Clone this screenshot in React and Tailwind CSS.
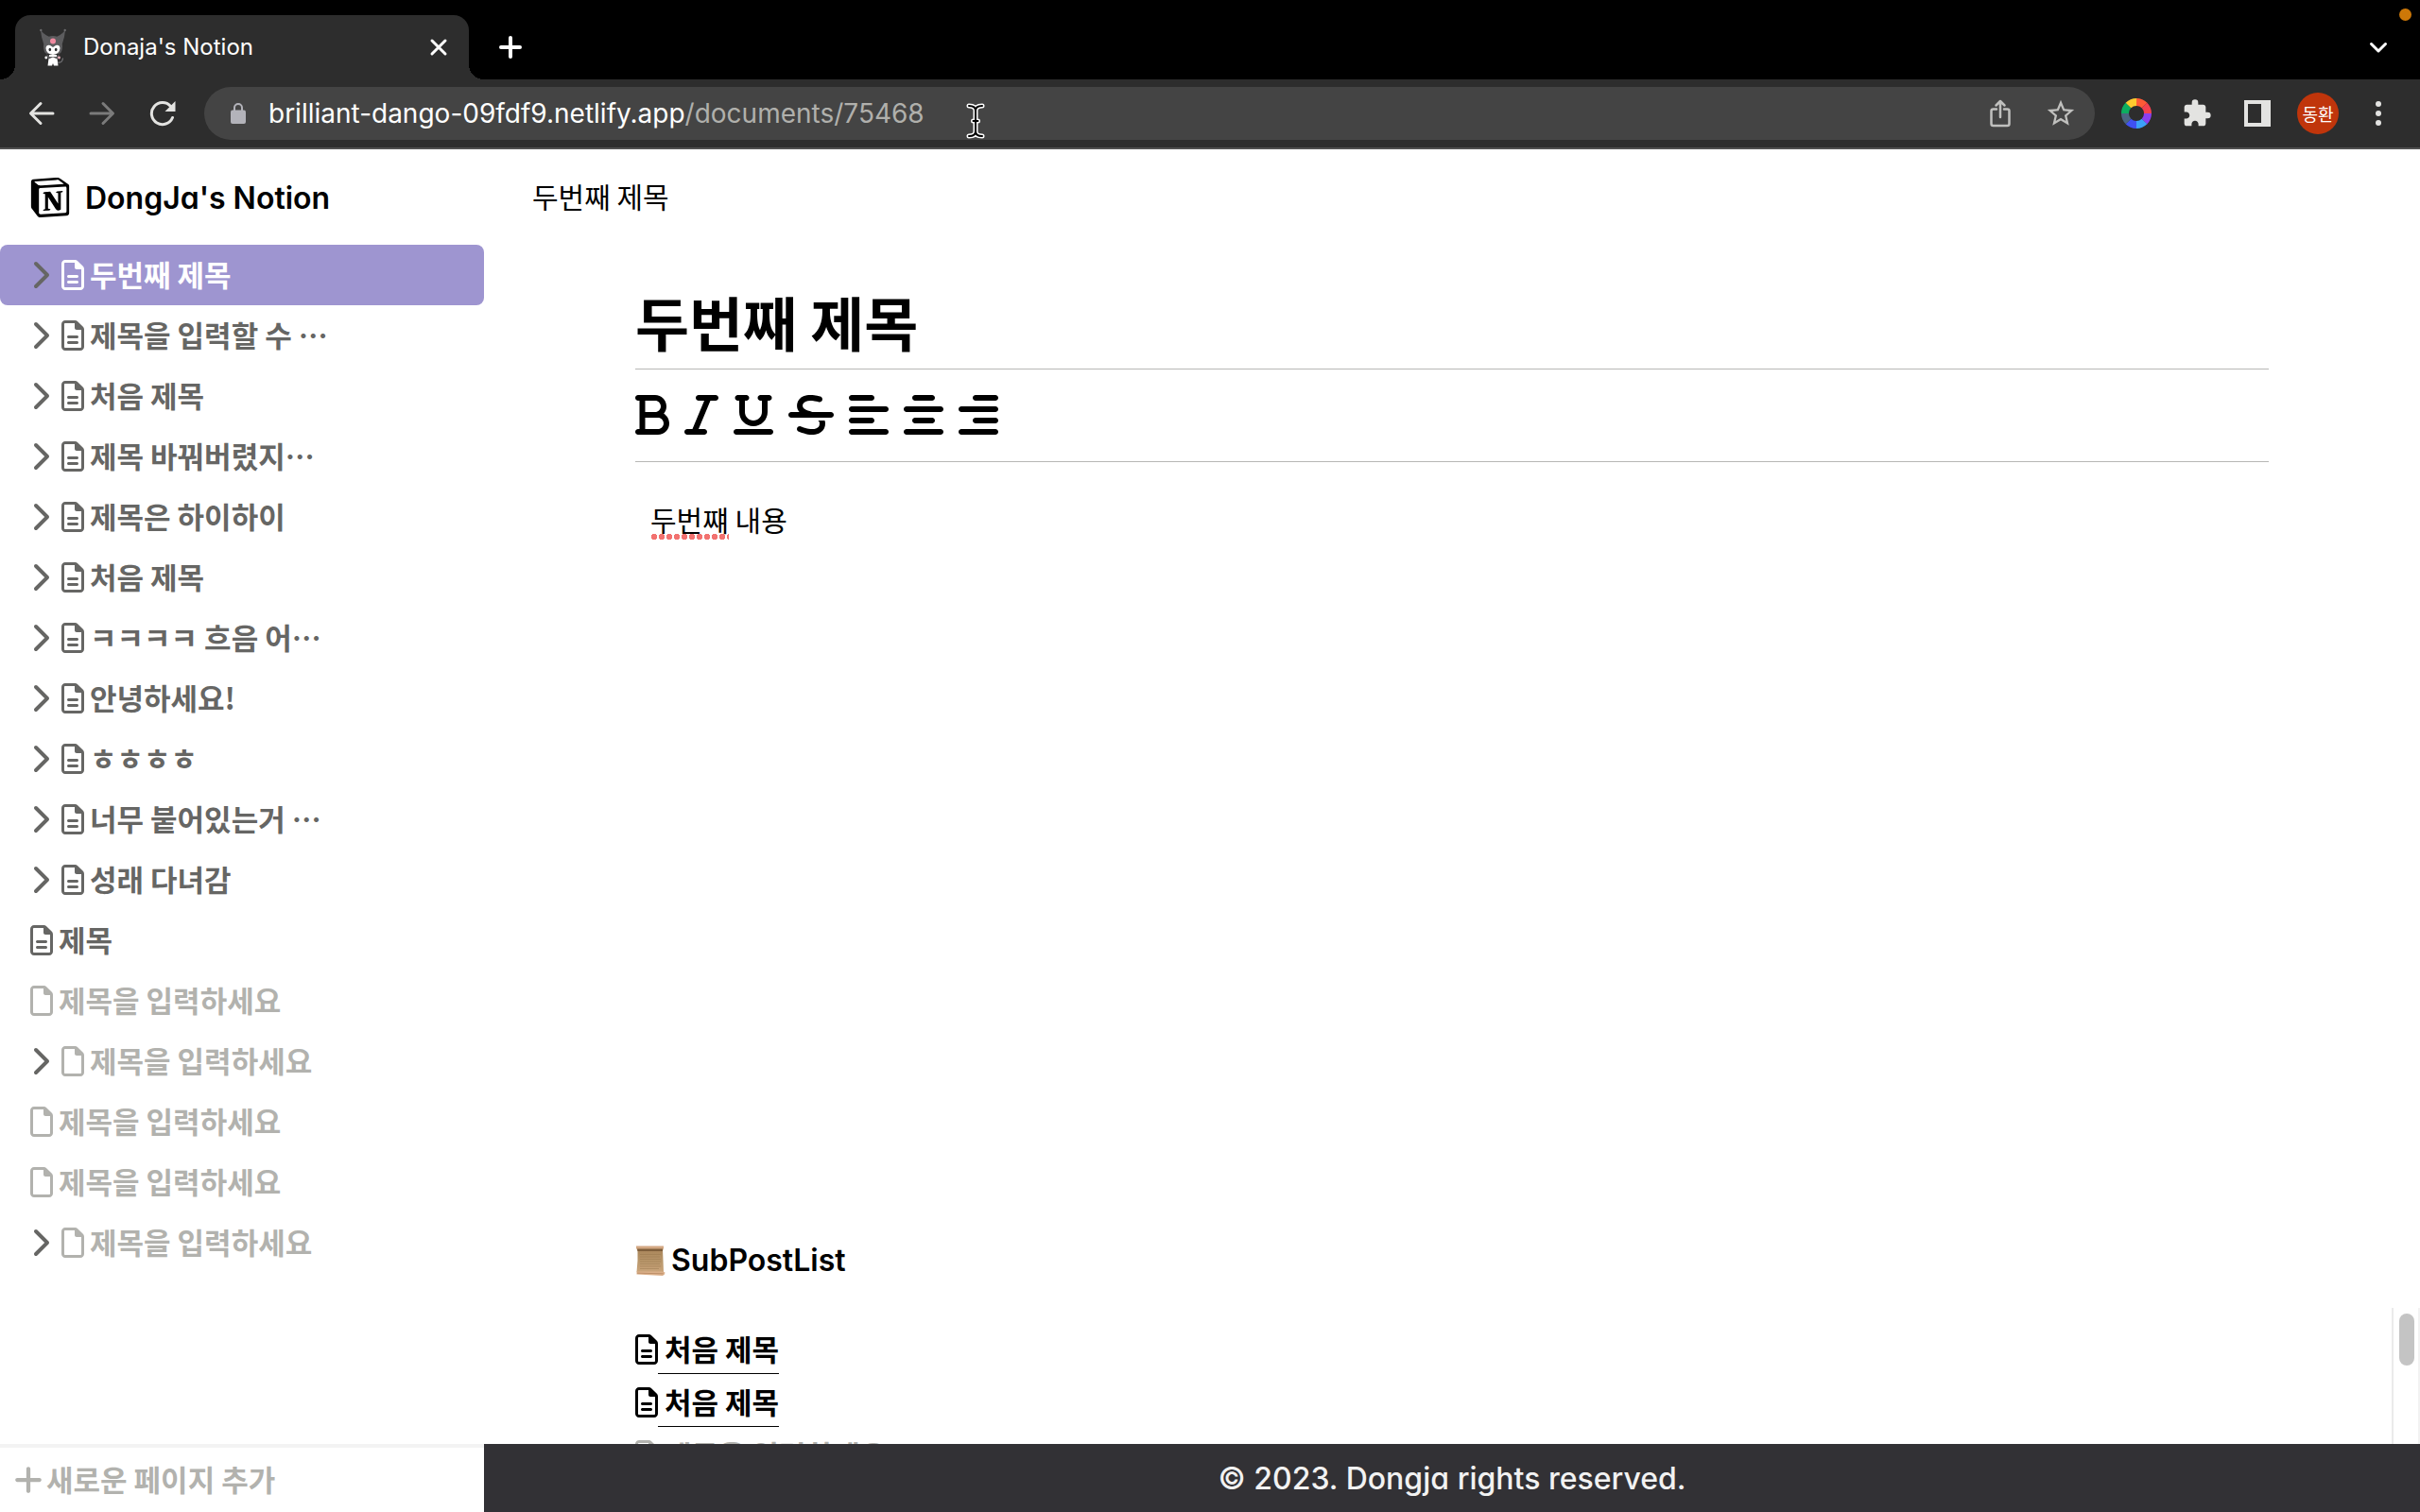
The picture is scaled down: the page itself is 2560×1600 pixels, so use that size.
import React from "react";
import {
  FaAlignCenter,
  FaAlignLeft,
  FaAlignRight,
  FaBold,
  FaChevronRight,
  FaItalic,
  FaPlus,
  FaRegFile,
  FaRegFileLines,
  FaStrikethrough,
  FaUnderline,
} from "react-icons/fa6";
import { SiNotion } from "react-icons/si";
import { MdExtension, MdStarBorder } from "react-icons/md";

const placeholder = "제목을 입력하세요";

const pages = [
  { title: "두번째 제목", expandable: true, selected: true },
  { title: "제목을 입력할 수 …", expandable: true },
  { title: "처음 제목", expandable: true },
  { title: "제목 바꿔버렸지…", expandable: true },
  { title: "제목은 하이하이", expandable: true },
  { title: "처음 제목", expandable: true },
  { title: "ㅋㅋㅋㅋ 흐음 어…", expandable: true },
  { title: "안녕하세요!", expandable: true },
  { title: "ㅎㅎㅎㅎ", expandable: true },
  { title: "너무 붙어있는거 …", expandable: true },
  { title: "성래 다녀감", expandable: true },
  { title: "제목" },
  { title: "" },
  { title: "", expandable: true },
  { title: "" },
  { title: "" },
  { title: "", expandable: true },
];

const subPosts = [{ title: "처음 제목" }, { title: "처음 제목" }, { title: "" }];

const tools = [
  { label: "Bold", Icon: FaBold, size: "h-12 w-9" },
  { label: "Italic", Icon: FaItalic, size: "h-12 w-9" },
  { label: "Underline", Icon: FaUnderline, size: "h-12 w-[42px]" },
  { label: "Strikethrough", Icon: FaStrikethrough, size: "h-12 w-12" },
  { label: "Align left", Icon: FaAlignLeft, size: "h-12 w-[42px]" },
  { label: "Align center", Icon: FaAlignCenter, size: "h-12 w-[42px]" },
  { label: "Align right", Icon: FaAlignRight, size: "h-12 w-[42px]" },
];

function Favicon() {
  return (
    <svg viewBox="0 0 28 40" className="h-10 w-7" aria-hidden="true">
      <path d="M1 2 Q1.5 9 4 16 L9 18 L13 10 Q6 8 1 2 Z M27 2 Q26.5 9 24 16 L19 18 L15 10 Q22 8 27 2 Z" fill="#5c5c5e" />
      <circle cx="1.3" cy="2" r="1.2" fill="#6d6d6f" />
      <circle cx="26.7" cy="2" r="1.2" fill="#6d6d6f" />
      <path d="M4 19 Q4 8 14 8 Q24 8 24 19 Q24 26 20 27 L8 27 Q4 26 4 19 Z" fill="#5c5c5e" />
      <path d="M6.5 21 Q7 17 11 18 L14 20 L17 18 Q21 17 21.5 21 Q21 27 14 28 Q7 27 6.5 21 Z" fill="#fff" />
      <circle cx="14" cy="13.5" r="3" fill="#f08aa0" />
      <ellipse cx="10.8" cy="22.5" rx="1.3" ry="1.8" fill="#2c2c2e" />
      <ellipse cx="17.2" cy="22.5" rx="1.3" ry="1.8" fill="#2c2c2e" />
      <path d="M10 28 L18 28 L19.5 39.5 L15 39.5 L14 37 L13 39.5 L8.5 39.5 Z" fill="#fff" />
      <path d="M7 27 L10.5 30 L17.5 30 L21 27 L18.5 32.5 L14 30.5 L9.5 32.5 Z" fill="#5c5c5e" />
      <circle cx="6.8" cy="31" r="1.4" fill="#fff" />
      <circle cx="20.5" cy="31" r="1.4" fill="#f4b6c2" />
      <path d="M19 36 Q24 37 24.5 31.5" fill="none" stroke="#77777a" strokeWidth="1.2" />
    </svg>
  );
}

function Scroll() {
  return (
    <svg viewBox="0 0 32 34" className="h-[34px] w-8" aria-hidden="true">
      <defs>
        <linearGradient id="paper" x1="0" x2="0" y1="0" y2="1">
          <stop offset="0" stopColor="#a9855a" />
          <stop offset="0.5" stopColor="#b8966a" />
          <stop offset="1" stopColor="#caa47a" />
        </linearGradient>
      </defs>
      <path d="M2.5 5 L29 5 L30 29 L1.5 29 Q3 17 2.5 5 Z" fill="url(#paper)" />
      <path d="M1 1.5 L30 1.5 L30 4 L29 6.5 L2.5 6.5 L1 4 Z" fill="#d3a883" />
      <path d="M2 4.5 L29 4.5 L29 7 L2.5 7 Z" fill="#7f5e3b" />
      <path d="M1.5 28.5 L29 28.5 L31.5 29.5 L31 31.5 L29 33 L1.5 31.5 Z" fill="#dcb08a" />
      <path d="M2 30.2 L29.5 30.8" stroke="#b5875f" strokeWidth="0.8" />
      <path d="M5 10.5 H27 M5 13 H26 M5 15.5 H27 M5 18 H27 M5 20.5 H26 M5 23 H27 M5 25.5 H25" stroke="#94734c" strokeWidth="0.6" opacity="0.7" />
    </svg>
  );
}

const wheelSlices = ["#ff5a36", "#f5414f", "#8a3ff0", "#3ba1f8", "#3f51f2", "#4a6580", "#0cae5f", "#fdca2e"];

function ColorWheel() {
  return (
    <svg viewBox="-16 -16 32 32" className="size-8" aria-hidden="true">
      {wheelSlices.map((color, i) => (
        <path key={color} d="M0 -8 L0 -16 A16 16 0 0 1 11.4 -11.2 L5.7 -5.7 A8 8 0 0 0 0 -8 Z" fill={color} transform={`rotate(${i * 45})`} />
      ))}
    </svg>
  );
}

function ToolbarButton({ label, children }) {
  return (
    <button type="button" aria-label={label} className="flex h-14 w-16 shrink-0 items-center justify-center">
      {children}
    </button>
  );
}

function Stroke({ children, className = "size-7", width = 3 }) {
  return (
    <svg viewBox="0 0 28 28" className={className} fill="none" stroke="currentColor" strokeWidth={width} strokeLinecap="round" strokeLinejoin="round" aria-hidden="true">
      {children}
    </svg>
  );
}

function BrowserChrome() {
  return (
    <header className="shrink-0 bg-black font-['Inter',sans-serif] text-white">
      <div className="relative flex h-[84px] items-end justify-between">
        <div className="flex h-[68px] items-center">
          <div className="flex h-full w-4 items-end">
            <div className="h-4 w-4 bg-[radial-gradient(circle_at_0_0,#000_16px,#2d2d2d_16px)]" />
          </div>
          <div className="flex h-full w-[480px] items-center rounded-t-2xl bg-[#2d2d2d] pr-[18px] pl-[26px]">
            <Favicon />
            <span className="ml-[18px] grow text-[24px] leading-8">Donaja's Notion</span>
            <button type="button" aria-label="Close tab" className="flex size-7 items-center justify-center">
              <Stroke width={3}>
                <path d="M7 7 L21 21 M21 7 L7 21" />
              </Stroke>
            </button>
          </div>
          <div className="flex h-full w-4 items-end">
            <div className="h-4 w-4 bg-[radial-gradient(circle_at_100%_0,#000_16px,#2d2d2d_16px)]" />
          </div>
          <button type="button" aria-label="New tab" className="ml-3 flex size-8 items-center justify-center">
            <Stroke width={4}>
              <path d="M14 4 V24 M4 14 H24" />
            </Stroke>
          </button>
        </div>
        <button type="button" aria-label="Search tabs" className="mr-3 flex h-[68px] w-16 items-center justify-center">
          <Stroke width={3}>
            <path d="M6.5 10.5 L14 18 L21.5 10.5" />
          </Stroke>
        </button>
        <span className="absolute top-[9px] right-[9px] size-[13px] rounded-full bg-[#cd7808]" />
      </div>

      <div className="flex h-[74px] items-center border-b-2 border-[#505050] bg-[#2d2d2d] px-3 text-[#e3e3e1]">
        <ToolbarButton label="Back">
          <Stroke>
            <path d="M26 14 H3 M13 3.5 L2.5 14 L13 24.5" />
          </Stroke>
        </ToolbarButton>
        <ToolbarButton label="Forward">
          <Stroke className="size-7 text-[#7b7b7b]">
            <path d="M2 14 H25 M15 3.5 L25.5 14 L15 24.5" />
          </Stroke>
        </ToolbarButton>
        <ToolbarButton label="Reload">
          <svg viewBox="0 0 28 28" className="size-7" aria-hidden="true">
            <path d="M24.5 18.5 A11.5 11.5 0 1 1 22.5 6.5" fill="none" stroke="currentColor" strokeWidth="3" strokeLinecap="round" />
            <path d="M27.5 1 V12 H16.5 Z" fill="currentColor" />
          </svg>
        </ToolbarButton>

        <div className="relative mx-3 flex h-14 grow items-center rounded-full bg-[#444] pr-1 pl-7">
          <svg viewBox="0 0 16 22" className="h-[22px] w-4 text-[#b3b3ba]" aria-hidden="true">
            <path d="M4 10 V5 A4 4 0 0 1 12 5 V10" fill="none" stroke="currentColor" strokeWidth="2" />
            <rect y="7.5" width="16" height="14.5" rx="2" fill="currentColor" />
          </svg>
          <div role="textbox" aria-label="Address" contentEditable suppressContentEditableWarning spellCheck={false} className="ml-6 grow text-[28px] leading-9 text-[#b0b0ac] outline-none">
            <span className="text-white">brilliant-dango-09fdf9.netlify.app</span>/documents/75468
          </div>
          <svg viewBox="0 0 20 38" className="absolute top-[17px] left-[806px] h-[38px] w-5" fill="none" strokeLinecap="round" strokeLinejoin="round" aria-hidden="true">
            <path d="M3 3 Q10 3 10 8 V30 Q10 35 3 35 M17 3 Q10 3 10 8 M10 30 Q10 35 17 35 M7.5 19 H12.5" stroke="#fff" strokeWidth="5" />
            <path d="M3 3 Q10 3 10 8 V30 Q10 35 3 35 M17 3 Q10 3 10 8 M10 30 Q10 35 17 35 M7.5 19 H12.5" stroke="#000" strokeWidth="2" />
          </svg>
          <div className="flex text-[#c0c0be]">
            <ToolbarButton label="Share">
              <svg viewBox="0 0 24 30" className="h-[30px] w-6" fill="none" stroke="currentColor" strokeWidth="2.5" strokeLinecap="round" strokeLinejoin="round" aria-hidden="true">
                <path d="M8 10.5 H4.5 Q2.5 10.5 2.5 12.5 V26 Q2.5 28 4.5 28 H19.5 Q21.5 28 21.5 26 V12.5 Q21.5 10.5 19.5 10.5 H16 M12 19 V2 M7.5 6.5 L12 2 L16.5 6.5" />
              </svg>
            </ToolbarButton>
            <ToolbarButton label="Bookmark this page">
              <MdStarBorder className="size-[34px]" />
            </ToolbarButton>
          </div>
        </div>

        <ToolbarButton label="Color picker">
          <ColorWheel />
        </ToolbarButton>
        <ToolbarButton label="Extensions">
          <MdExtension className="size-8" />
        </ToolbarButton>
        <ToolbarButton label="Side panel">
          <svg viewBox="0 0 28 28" className="size-7" aria-hidden="true">
            <path d="M0 0 H28 V28 H0 Z M4 4 V24 H18 V4 Z" fill="currentColor" fillRule="evenodd" />
          </svg>
        </ToolbarButton>
        <ToolbarButton label="Profile">
          <span className="flex size-11 items-center justify-center rounded-full bg-[#c0350b] font-['Noto_Sans_CJK_KR',sans-serif] text-[18px] leading-none text-white">동환</span>
        </ToolbarButton>
        <ToolbarButton label="Menu">
          <svg viewBox="0 0 6 26" className="h-[26px] w-1.5" fill="currentColor" aria-hidden="true">
            <circle cx="3" cy="3" r="3" />
            <circle cx="3" cy="13" r="3" />
            <circle cx="3" cy="23" r="3" />
          </svg>
        </ToolbarButton>
      </div>
    </header>
  );
}

function PageRow({ title, expandable, selected }) {
  const Icon = title ? FaRegFileLines : FaRegFile;
  const tone = selected ? "text-white" : title ? "text-[#666664]" : "text-[#b2b2ae]";
  return (
    <li className={selected ? "flex h-16 items-center rounded-lg bg-[#9e95d0] pl-8" : "flex h-16 items-center pl-8"}>
      {expandable && (
        <button type="button" aria-label="하위 페이지 펼치기" className="w-[33px] text-[#666664]">
          <FaChevronRight className="h-8 w-5" />
        </button>
      )}
      <a href="#page" className={`flex items-center gap-1.5 text-[31px] leading-10 font-bold ${tone}`}>
        <Icon className="h-8 w-6" />
        <span className="pb-0.5">{title || placeholder}</span>
      </a>
    </li>
  );
}

function Sidebar() {
  return (
    <aside className="flex w-1/5 shrink-0 flex-col">
      <a href="#home" className="flex h-[101px] items-center gap-4 pl-8">
        <SiNotion className="size-[42px]" />
        <span className="pt-0.5 font-['Inter',sans-serif] text-[32px] leading-10 font-semibold [font-feature-settings:'cv11']">DongJa's Notion</span>
      </a>
      <nav className="min-h-0 grow overflow-hidden">
        <ul>
          {pages.map((page, i) => (
            <PageRow key={i} {...page} />
          ))}
        </ul>
      </nav>
      <button type="button" className="flex h-[72px] shrink-0 items-center gap-1 border-t-4 border-[#f3f3f3] pl-[15px] text-[31px] leading-10 font-bold text-[#b2b2ae]">
        <FaPlus className="h-[34px] w-[30px]" />
        <span className="pb-0.5">새로운 페이지 추가</span>
      </button>
    </aside>
  );
}

function Editor() {
  return (
    <main className="flex min-w-0 grow flex-col">
      <nav aria-label="Breadcrumb" className="flex h-[101px] shrink-0 items-center px-[51px] pb-1">
        <a href="#page" className="text-[30px] leading-10">두번째 제목</a>
      </nav>

      <article className="flex min-h-0 grow flex-col pt-10">
        <input
          aria-label="제목"
          defaultValue="두번째 제목"
          className="mx-40 h-[92px] shrink-0 border-b border-[#b7b7b5] pb-2 text-[62px] font-bold outline-none"
        />
        <div role="toolbar" aria-label="서식" className="mx-40 flex h-[98px] shrink-0 items-center gap-4 border-b border-[#b7b7b5] pb-0.5">
          {tools.map(({ label, Icon, size }) => (
            <button key={label} type="button" aria-label={label}>
              <Icon className={size} />
            </button>
          ))}
        </div>
        <div
          role="textbox"
          aria-label="내용"
          contentEditable
          suppressContentEditableWarning
          spellCheck={false}
          className="mx-40 grow px-4 pt-10 text-[30px] leading-10 outline-none"
        >
          <span className="inline-block bg-[radial-gradient(circle,#f27270_3px,transparent_3px)] bg-[length:8px_6px] bg-[position:0_100%] bg-repeat-x pb-0.5">두번쨰</span> 내용
        </div>
        <h2 className="mx-40 mb-[26px] flex h-12 shrink-0 items-center gap-1.5 font-['Inter',sans-serif] text-[32px] font-semibold">
          <Scroll />
          SubPostList
        </h2>
        <div className="flex h-36 shrink-0 overflow-hidden">
          <ul className="grow pt-4 pl-40">
            {subPosts.map(({ title }, i) => {
              const Icon = title ? FaRegFileLines : FaRegFile;
              return (
                <li key={i} className={title ? "flex h-14 items-center text-black" : "flex h-14 items-center text-[#b2b2ae]"}>
                  <Icon className="h-8 w-6" />
                  <a href="#sub" className="flex h-[52px] items-center border-b border-current pb-0.5 pl-[7px] text-[31px] leading-10 font-bold">
                    {title || placeholder}
                  </a>
                </li>
              );
            })}
          </ul>
          <div className="flex w-[30px] justify-center border-x-2 border-r-[#f2f2f2] border-l-[#ebebeb] pt-1.5 pl-0.5" aria-hidden="true">
            <div className="h-[55px] w-4 rounded-full bg-[#c4c4c4]" />
          </div>
        </div>
      </article>

      <footer className="flex h-[72px] shrink-0 items-center justify-center bg-[#323135] pt-0.5 font-['Inter',sans-serif] text-[32px] leading-10 font-medium text-[#f2f2f2] [font-feature-settings:'cv11']">
        © 2023. Dongja rights reserved.
      </footer>
    </main>
  );
}

export default function App() {
  return (
    <div className="flex h-screen flex-col overflow-hidden bg-white font-['Noto_Sans_CJK_KR',sans-serif] text-black">
      <BrowserChrome />
      <div className="flex min-h-0 grow">
        <Sidebar />
        <Editor />
      </div>
    </div>
  );
}
